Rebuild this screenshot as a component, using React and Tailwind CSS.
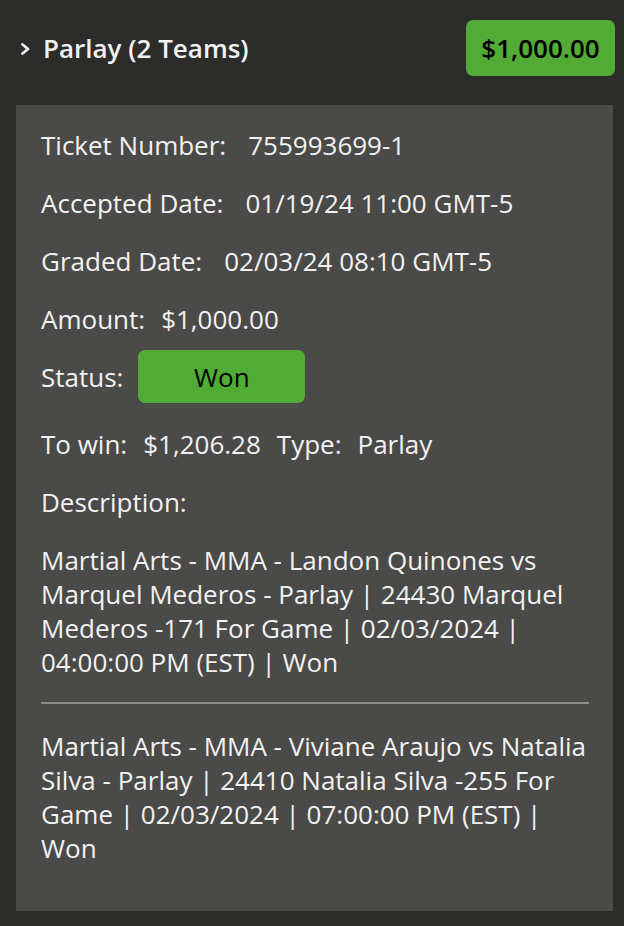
import React from 'react';

const Row = ({ children, className = '' }) => (
    <div className={`flex items-center ${className}`}>{children}</div>
);

const App = () => {
    return (
        <div className="w-[624px] h-[926px] bg-[#2c2c2a] text-[#f2f2f2] font-['Open_Sans',sans-serif] overflow-hidden">
            <div className="flex items-center justify-between pl-[20px] pr-[9px] pt-[20px] pb-[29px]">
                <div className="flex items-center gap-[12px]">
                    <svg width="11" height="14" viewBox="0 0 11 14" className="mt-[2px]">
                        <path d="M2.5 2.5 L8 7 L2.5 11.5" fill="none" stroke="#f2f2f2" strokeWidth="2.8" strokeLinecap="round" strokeLinejoin="round" />
                    </svg>
                    <span className="text-[26px] font-semibold">Parlay (2 Teams)</span>
                </div>
                <div className="w-[149px] h-[56px] rounded-[7px] bg-[#52ab34] text-black text-[26px] font-semibold flex items-center justify-center">
                    $1,000.00
                </div>
            </div>
            <div className="ml-[16px] mr-[11px] bg-[#4a4a48] h-[806px] pl-[25px] pr-[24px] pt-[23px] text-[26px] leading-[34px]">
                <div className="flex flex-col gap-[24px]">
                    <Row><span>Ticket Number:</span><span className="ml-[22px]">755993699-1</span></Row>
                    <Row><span>Accepted Date:</span><span className="ml-[22px]">01/19/24 11:00 GMT-5</span></Row>
                    <Row><span>Graded Date:</span><span className="ml-[22px]">02/03/24 08:10 GMT-5</span></Row>
                    <Row><span>Amount:</span><span className="ml-[16px]">$1,000.00</span></Row>
                </div>
                <Row className="mt-[14px]">
                    <span>Status:</span>
                    <div className="ml-[15px] w-[167px] h-[53px] rounded-[7px] bg-[#52ab34] text-black flex items-center justify-center">Won</div>
                </Row>
                <Row className="mt-[24px]">
                    <span>To win:</span><span className="ml-[16px]">$1,206.28</span>
                    <span className="ml-[16px]">Type:</span><span className="ml-[16px]">Parlay</span>
                </Row>
                <div className="mt-[24px]">Description:</div>
                <p className="mt-[24px]">
                    Martial Arts - MMA - Landon Quinones vs Marquel Mederos - Parlay | 24430 Marquel Mederos -171 For Game | 02/03/2024 | 04:00:00 PM (EST) | Won
                </p>
                <div className="mt-[23px] mb-[25px] h-[2px] bg-[#8c8c8a]" />
                <p>
                    Martial Arts - MMA - Viviane Araujo vs Natalia Silva - Parlay | 24410 Natalia Silva -255 For Game | 02/03/2024 | 07:00:00 PM (EST) | Won
                </p>
            </div>
        </div>
    );
};

export default App;
